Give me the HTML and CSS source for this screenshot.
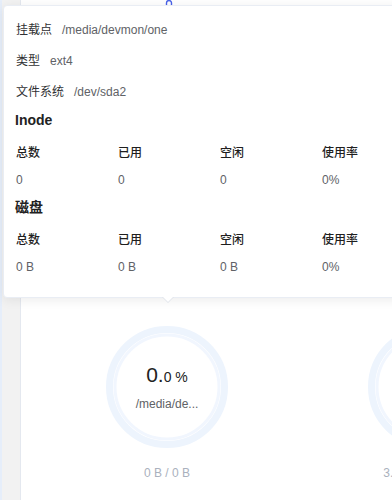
FILE: index.html
```html
<!DOCTYPE html>
<html lang="zh-CN">

<head>
    <meta charset="UTF-8">
    <meta name="viewport" content="width=device-width, initial-scale=1.0">
    <title>磁盘信息</title>
    <link rel="stylesheet" href="styles.css">
</head>

<body>
    <div class="page">
        <div class="side"></div>

        <div class="card">
            <div class="peek">
                <svg width="8" height="6" viewBox="0 0 8 6">
                    <path d="M1.5 6 V3 A2.5 2.5 0 0 1 6.5 3 V6" fill="none" stroke="#4a63e8" stroke-width="1.4" />
                </svg>
            </div>

            <div class="disk-list">
                <div class="disk">
                    <div class="ring">
                        <svg width="122" height="122" viewBox="0 0 122 122">
                            <circle cx="61" cy="61" r="57.5" fill="none" stroke="#edf4fd" stroke-width="7" />
                            <circle cx="61" cy="61" r="52" fill="none" stroke="#f1f6fe" stroke-width="3" />
                        </svg>
                        <div class="ring-text">
                            <div class="percent"><span class="big">0.</span>0 %</div>
                            <div class="mount">/media/de...</div>
                        </div>
                    </div>
                    <div class="size">0 B / 0 B</div>
                </div>

                <div class="disk">
                    <div class="ring">
                        <svg width="122" height="122" viewBox="0 0 122 122">
                            <circle cx="61" cy="61" r="57.5" fill="none" stroke="#edf4fd" stroke-width="7" />
                            <circle cx="61" cy="61" r="52" fill="none" stroke="#f1f6fe" stroke-width="3" />
                        </svg>
                    </div>
                    <div class="size">3.1 GB / 29.3 GB</div>
                </div>
            </div>
        </div>

        <!-- 弹出的详细信息 -->
        <div class="popover">
            <div class="row"><span class="label">挂载点</span><span class="value">/media/devmon/one</span></div>
            <div class="row"><span class="label">类型</span><span class="value">ext4</span></div>
            <div class="row"><span class="label">文件系统</span><span class="value">/dev/sda2</span></div>

            <div class="title">Inode</div>
            <div class="grid">
                <div class="head">总数</div>
                <div class="head">已用</div>
                <div class="head">空闲</div>
                <div class="head">使用率</div>
                <div class="cell">0</div>
                <div class="cell">0</div>
                <div class="cell">0</div>
                <div class="cell">0%</div>
            </div>

            <div class="title title-disk">磁盘</div>
            <div class="grid">
                <div class="head">总数</div>
                <div class="head">已用</div>
                <div class="head">空闲</div>
                <div class="head">使用率</div>
                <div class="cell">0 B</div>
                <div class="cell">0 B</div>
                <div class="cell">0 B</div>
                <div class="cell">0%</div>
            </div>
        </div>
    </div>
</body>

</html>
```

FILE: styles.css
```css
body {
    margin: 0;
    font-family: "Liberation Sans", "Noto Sans CJK SC", sans-serif;
    background-color: #f2f2f2;
    overflow: hidden;
}

.page {
    position: relative;
    display: flex;
    height: 500px;
    border-left: 2px solid #e6eefa;
}

.side {
    width: 18px;
    flex-shrink: 0;
}

.card {
    flex: 1;
    min-width: 0;
    background: white;
    border-left: 1px solid #e4e8ef;
    overflow: hidden;
}

.peek {
    height: 6px;
    padding-left: 144px;
    line-height: 0;
}

.disk-list {
    display: flex;
    margin-top: 320px;
    padding-left: 15px;
}

.disk {
    width: 262px;
    flex-shrink: 0;
    display: flex;
    flex-direction: column;
    align-items: center;
}

.ring {
    display: grid;
    width: 122px;
    height: 122px;
}

.ring svg,
.ring-text {
    grid-area: 1 / 1;
}

.ring-text {
    display: flex;
    flex-direction: column;
    align-items: center;
    justify-content: center;
}

.percent {
    font-size: 14px;
    line-height: 26px;
    color: #222;
    margin-bottom: 5px;
}

.percent .big {
    font-size: 21px;
}

.mount {
    font-size: 12px;
    line-height: 18px;
    color: #606266;
}

.size {
    margin-top: 16px;
    font-size: 12px;
    line-height: 18px;
    color: #aab1bd;
}

.popover {
    position: absolute;
    top: 5px;
    left: 1px;
    width: 420px;
    padding: 9px 12px 17px;
    background: white;
    border: 1px solid #e9edf4;
    border-radius: 4px;
    box-shadow: 0 2px 12px rgba(0, 0, 0, 0.08);
    font-size: 12px;
}

.popover::before,
.popover::after {
    content: "";
    position: absolute;
    left: 158px;
    border: 6px solid transparent;
    border-bottom: none;
}

.popover::before {
    bottom: -6px;
    border-top-color: #dfe3ea;
}

.popover::after {
    bottom: -5px;
    border-top-color: white;
}

.row {
    line-height: 31px;
}

.label {
    color: #303133;
    margin-right: 10px;
}

.value {
    color: #606266;
}

.title {
    font-size: 14px;
    font-weight: bold;
    line-height: 24px;
    color: #222;
    margin-left: -1px;
}

.title-disk {
    margin-top: 2px;
}

.grid {
    display: grid;
    grid-template-columns: repeat(4, 102px);
    margin-top: 7px;
}

.head {
    line-height: 28px;
    color: #1f1f1f;
    font-weight: 500;
}

.cell {
    line-height: 26px;
    color: #606266;
}
```
